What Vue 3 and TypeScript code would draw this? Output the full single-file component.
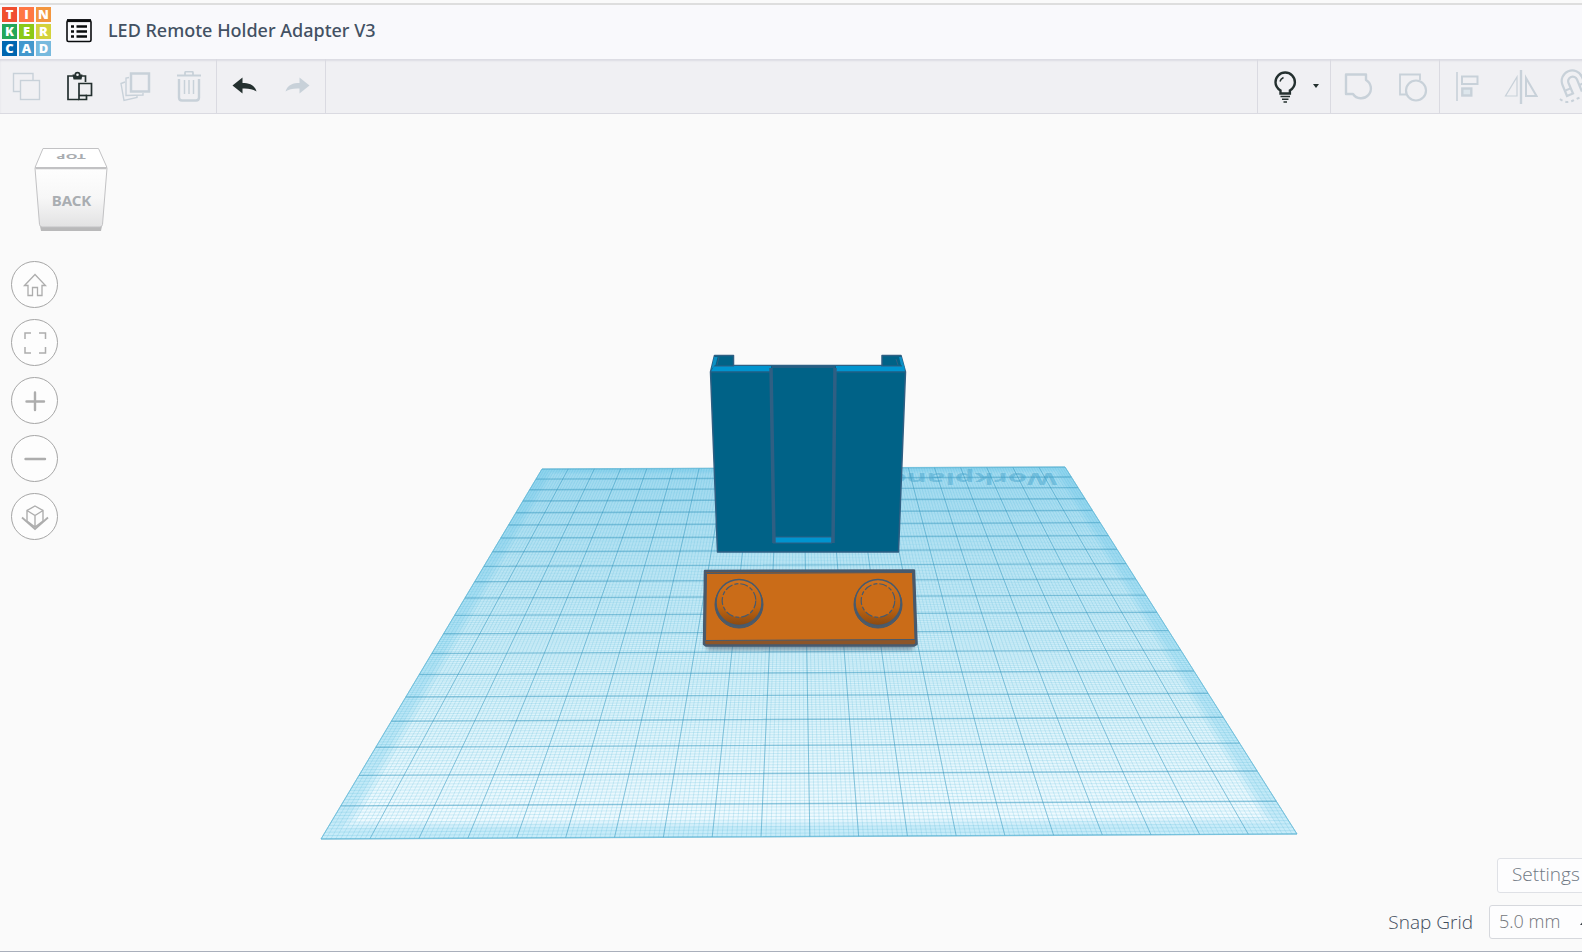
<script setup lang="ts">
import { ref } from 'vue'

type Point = [number, number]

const designName = ref('LED Remote Holder Adapter V3')
const snap = ref('5.0 mm')

const tiles = [
  { letter: 'T', tone: 'red' },
  { letter: 'I', tone: 'coral' },
  { letter: 'N', tone: 'orange' },
  { letter: 'K', tone: 'green' },
  { letter: 'E', tone: 'lime' },
  { letter: 'R', tone: 'yellow' },
  { letter: 'C', tone: 'navy' },
  { letter: 'A', tone: 'blue' },
  { letter: 'D', tone: 'sky' },
]

// Workplane corners on screen: near-left, near-right, far-right, far-left
const corners: Point[] = [[321, 839], [1297, 834], [1065, 467], [542, 469]]

// Projective mapping of the unit square onto the four corners
function projector(c: Point[]) {
  const [[x0, y0], [x1, y1], [x2, y2], [x3, y3]] = c
  const dx1 = x1 - x2, dx2 = x3 - x2, sx = x0 - x1 + x2 - x3
  const dy1 = y1 - y2, dy2 = y3 - y2, sy = y0 - y1 + y2 - y3
  const det = dx1 * dy2 - dx2 * dy1
  const g = (sx * dy2 - dx2 * sy) / det
  const h = (dx1 * sy - sx * dy1) / det
  return (u: number, v: number): string => {
    const w = g * u + h * v + 1
    const x = ((x1 - x0 + g * x1) * u + (x3 - x0 + h * x3) * v + x0) / w
    const y = ((y1 - y0 + g * y1) * u + (y3 - y0 + h * y3) * v + y0) / w
    return `${x.toFixed(2)} ${y.toFixed(2)}`
  }
}

const project = projector(corners)

function gridPath(steps: number, axis: 'u' | 'v'): string {
  let d = ''
  for (let i = 0; i <= steps; i++) {
    const t = i / steps
    d += axis === 'u'
      ? `M${project(t, 0)}L${project(t, 1)}`
      : `M${project(0, t)}L${project(1, t)}`
  }
  return d
}

function quad(inset: number): string {
  const a = inset, b = 1 - inset
  return `M${project(a, a)}L${project(b, a)}L${project(b, b)}L${project(a, b)}Z`
}

const plane = quad(0)
const rims = [0.015, 0.02, 0.025].map((inset) => plane + quad(inset))
const fineColumns = gridPath(200, 'u')
const fineRows = gridPath(200, 'v')
const majorColumns = gridPath(20, 'u')
const majorRows = gridPath(20, 'v')
</script>

<template>
  <div class="app">
    <header class="titlebar">
      <a class="logo" href="#" aria-label="Tinkercad">
        <span v-for="t in tiles" :key="t.letter" class="tile" :class="t.tone">{{ t.letter }}</span>
      </a>
      <button class="menu" type="button" aria-label="Designs">
        <svg width="26" height="24" viewBox="0 0 26 24">
          <rect x="1" y="1.5" width="24" height="21" rx="1.5" fill="none" stroke="#0a0c0e" stroke-width="1.6" />
          <path d="M1 1.6h24" stroke="#0a0c0e" stroke-width="3" />
          <path d="M5 7.5h3M5 12.5h3M5 17.5h3M10.500 7.500h10.500M10.500 12.500h10.500M10.500 17.500h10.500" stroke="#0a0c0e" stroke-width="2.4" />
        </svg>
      </button>
      <h1>{{ designName }}</h1>
    </header>

    <div class="toolbar" role="toolbar" aria-label="Editing tools">
      <div class="group">
        <button type="button" class="tool off" aria-label="Copy">
          <svg width="32" height="32" viewBox="0 0 32 32">
            <path d="M9 20.500H2.500V2.500h19.500V9" stroke-width="1.4" />
            <rect x="9.500" y="9.500" width="19" height="19" stroke-width="1.4" />
          </svg>
        </button>
        <button type="button" class="tool" aria-label="Paste">
          <svg width="32" height="32" viewBox="0 0 32 32">
            <path d="M14 28.500H3V5h5M16.500 5h4v6" stroke-width="1.7" />
            <path d="M7.500 3.500h2a3 2.800 0 0 1 6 0h2l-1 5h-8z" fill="#24302f" stroke="none" />
            <circle cx="12.500" cy="3.800" r="1.300" fill="#f0f0f3" stroke="none" />
            <path d="M14 12.500H26.500V24.500H21.500V28.500H14Z" stroke-width="1.7" />
            <path d="M14 24.500h8" stroke-width="1.7" />
          </svg>
        </button>
        <button type="button" class="tool off" aria-label="Duplicate">
          <svg width="32" height="32" viewBox="0 0 32 32">
            <rect x="12" y="2.500" width="18" height="18" stroke-width="2.500" />
            <path d="M10 6.500l-3 .5V24.500l17 -.5v-2" stroke-width="1.4" />
            <path d="M6 11l-4 1.500L5 29.500l13 -3v-2" stroke-width="1.4" />
          </svg>
        </button>
        <button type="button" class="tool off" aria-label="Delete">
          <svg width="32" height="32" viewBox="0 0 32 32">
            <path d="M4 4.500h24M12 4V2q0-1.500 1.500-1.500h5Q20 .500 20 2v2" stroke-width="1.800" />
            <path d="M6 8v18.500q0 3 3 3h14q3 0 3-3V8" stroke-width="2.400" />
            <path d="M11.500 9v14M16 9v14M20.500 9v14" stroke-width="1.500" />
          </svg>
        </button>
      </div>
      <div class="group">
        <button type="button" class="tool" aria-label="Undo">
          <svg width="32" height="32" viewBox="0 0 32 32">
            <path d="M4.500 14.500l10-8v5.500c6 0 12 1.500 14 8.500q-5-3.500-14-3v5z" fill="#24302f" stroke="none" />
          </svg>
        </button>
        <button type="button" class="tool off" aria-label="Redo">
          <svg width="32" height="32" viewBox="0 0 32 32">
            <path d="M27.500 14.500l-10-8v5.500c-6 0-12 1.500-14 8.500q5-3.500 14-3v5z" fill="#c8d1d9" stroke="none" />
          </svg>
        </button>
      </div>

      <div class="group push">
        <button type="button" class="tool" aria-label="Show all">
          <svg width="32" height="32" viewBox="0 0 32 32">
            <path d="M11.500 22.500v-3c-3-2-5-4.700-5-8.300a9.700 9.700 0 0 1 19.400 0c0 3.600-2 6.300-5 8.300v3z" stroke-width="2.400" />
            <path d="M11 10.500q.500-2.500 3.500-4" stroke-width="1.500" />
            <path d="M11.500 25.500h9.500M13 28.300h6.500M14.500 31h3.500" stroke-width="1.600" />
          </svg>
        </button>
        <button type="button" class="caret" aria-label="Visibility options">
          <svg width="6" height="4" viewBox="0 0 6 4"><path d="M0 0h6L3 4z" fill="#24302f" /></svg>
        </button>
      </div>
      <div class="group lead">
        <button type="button" class="tool off" aria-label="Group">
          <svg width="32" height="32" viewBox="0 0 32 32">
            <path d="M4 3.500h20v5.500a9.800 9.800 0 1 1-13 14H4z" stroke-width="2.400" stroke-linejoin="round" />
          </svg>
        </button>
        <button type="button" class="tool off" aria-label="Ungroup">
          <svg width="32" height="32" viewBox="0 0 32 32">
            <path d="M10 23.500H4V3.500h20V9" stroke-width="1.800" />
            <circle cx="20" cy="19.500" r="10" stroke-width="2.200" />
          </svg>
        </button>
      </div>
      <div class="group lead">
        <button type="button" class="tool off" aria-label="Align">
          <svg width="32" height="32" viewBox="0 0 32 32">
            <path d="M6 1v29" stroke-width="1.600" />
            <rect x="11" y="5.500" width="15.500" height="7.500" stroke-width="2" />
            <rect x="11.300" y="17.500" width="9" height="7" fill="#dde6ec" stroke-width="2.400" />
          </svg>
        </button>
        <button type="button" class="tool off" aria-label="Flip">
          <svg width="34" height="36" viewBox="0 0 34 36">
            <path d="M17 1v34" stroke-width="2.400" />
            <path d="M13 8v19H1.500z" stroke-width="1.200" />
            <path d="M22 9v18h10.500z" stroke-width="2" />
          </svg>
        </button>
        <button type="button" class="tool off" aria-label="Cruise">
          <svg width="32" height="36" viewBox="0 0 32 36">
            <path d="M8 27L3.500 16a10.500 10.500 0 0 1 19.500-8l5 11.500-5.500 2-4.500-11a4.500 4.500 0 0 0-8.500 3.500l4.500 10.500z" stroke-width="2.200" />
            <path d="M6.500 21.500l5.500-2.300M20.500 16l5.500-2.300" stroke-width="2" />
            <path d="M1 30q6 5 13 1.500t15-5" stroke-width="2" stroke-dasharray="3 3" />
          </svg>
        </button>
      </div>
    </div>

    <main class="workspace">
      <svg class="scene" viewBox="0 114 1582 837" role="img" aria-label="Workplane with two shapes">
        <defs>
          <linearGradient id="planeFill" x1="0" y1="0" x2="0" y2="1">
            <stop offset="0" stop-color="#b4e3f6" />
            <stop offset=".25" stop-color="#c6eaf7" />
            <stop offset=".6" stop-color="#d9f2fa" />
            <stop offset="1" stop-color="#f2fbff" />
          </linearGradient>
          <linearGradient id="knob" x1="0" y1="0" x2="0" y2="1">
            <stop offset="0" stop-color="#d2731d" />
            <stop offset=".6" stop-color="#c0640f" />
            <stop offset="1" stop-color="#8a4a12" />
          </linearGradient>
          <filter id="soft" x="-10%" y="-10%" width="120%" height="140%">
            <feGaussianBlur stdDeviation="2" />
          </filter>
        </defs>

        <path :d="plane" fill="url(#planeFill)" />
        <path v-for="(rim, i) in rims" :key="i" :d="rim" fill="#7fd2f0" fill-opacity=".13" fill-rule="evenodd" />
        <g fill="none">
          <path :d="fineColumns" stroke="#48b0d8" stroke-opacity=".22" stroke-width=".9" />
          <path :d="fineRows" stroke="#48b0d8" stroke-opacity=".22" stroke-width=".9" />
          <path :d="majorColumns" stroke="#2b8fb8" stroke-opacity=".42" />
          <path :d="majorRows" stroke="#2b8fb8" stroke-opacity=".42" stroke-width="1.400" />
          <path :d="plane" stroke="#6cc5e4" stroke-opacity=".5" />
        </g>
        <text class="plane-label" transform="matrix(-1 0 0 -.5 1057 473)">Workplane</text>

        <!-- Remote holder -->
        <g stroke="#2f5f83" stroke-width="1.500" stroke-linejoin="round">
          <path d="M714.500 355.500H733.500V365.500H882V355.500H901L905.500 372L898.500 552H717.500L710.500 372Z" fill="#006287" />
          <path d="M714 366H771L771 371.500H711ZM836 366H904L905 371.500H836Z" fill="#0094cf" stroke="none" />
          <path d="M714 357l3.500 0-2 8-4 4ZM899 357l2.500 0 3.500 12-4-4Z" fill="#0b8fc4" stroke="none" />
          <path d="M717 365L719 357M898 365L896 359M711 372H770M837 372H905M714 366H734M881 366H902" fill="none" stroke-width="1" />
          <path d="M773 537H832V543H773Z" fill="#0094cf" stroke-width="1" />
          <path d="M771 368L774 543M835 368L833 543" fill="none" stroke-width="3.500" />
          <path d="M772 367H835" fill="none" />
        </g>

        <!-- Mounting plate -->
        <path d="M705 642H916L912 650H708Z" fill="#3a4a60" fill-opacity=".5" filter="url(#soft)" />
        <g stroke="#475a6e" stroke-linejoin="round">
          <path d="M705 571L914 570.500L916.500 644L914 645.500H706L704 644Z" fill="#8d5528" stroke-width="2.500" />
          <path d="M706.500 573.500L912.500 572.500L915 639.500L705.500 640.500Z" fill="#ca6c18" stroke-width="1" />
          <g v-for="x in [739, 878]" :key="x">
            <ellipse :cx="x" cy="604.500" rx="24" ry="23.500" fill="#4e5c68" stroke-width="1" />
            <circle :cx="x" cy="602.500" r="23" fill="url(#knob)" stroke-width="1.500" />
            <circle :cx="x" cy="600.500" r="16.800" fill="#ca6c18" stroke-width="1.200" stroke-dasharray="8 2 4 2" />
          </g>
        </g>
      </svg>

      <button type="button" class="viewcube" aria-label="View cube">
        <svg width="76" height="88" viewBox="33 145 76 88">
          <defs>
            <linearGradient id="face" x1="0" y1="0" x2="0" y2="1">
              <stop offset="0" stop-color="#fefefe" />
              <stop offset=".5" stop-color="#f7f7f7" />
              <stop offset="1" stop-color="#e2e2e3" />
            </linearGradient>
          </defs>
          <path d="M40 226H102L101 231H41Z" fill="#b9b9ba" />
          <path d="M43 148.500H98.500L107 167.500H35Z" fill="#fff" stroke="#c2c2c4" stroke-linejoin="round" />
          <path d="M35 168H107L102.500 224.500Q102 227 100 227H42Q40 227 39.500 224.500Z" fill="url(#face)" stroke="#c2c2c4" stroke-linejoin="round" />
          <path d="M36 168.500H106" stroke="#c2c2c4" stroke-width="1.500" />
          <text class="cube-top" transform="matrix(-1 0 0 -.5 71 154)" text-anchor="middle">TOP</text>
          <text class="cube-face" x="71.500" y="206" text-anchor="middle">BACK</text>
        </svg>
      </button>

      <nav class="views" aria-label="Camera">
        <button type="button" aria-label="Home view">
          <svg viewBox="0 0 28 28"><path d="M3.500 14.500L14 3.500L24.500 14.500H21V24.500H16.500V16.500H11.500V24.500H7V14.500Z" stroke-width="1.300" /></svg>
        </button>
        <button type="button" aria-label="Fit all in view">
          <svg viewBox="0 0 28 28"><path d="M4 10V4H10M18 4H24.500V10M24.500 18V24H18M10 24H4V18" stroke-width="1.500" /></svg>
        </button>
        <button type="button" aria-label="Zoom in">
          <svg viewBox="0 0 28 28"><path d="M14 5.500V23M5.500 14.500H23" stroke-width="2.400" stroke-linecap="round" /></svg>
        </button>
        <button type="button" aria-label="Zoom out">
          <svg viewBox="0 0 28 28"><path d="M4.500 14H24" stroke-width="2.400" stroke-linecap="round" /></svg>
        </button>
        <button type="button" aria-label="Switch projection">
          <svg viewBox="0 0 28 28">
            <path d="M14 3L22 7.500V18L14 24L6 18V7.500ZM6 7.500L14 12.500L22 7.500M14 12.500V24" stroke-width="1.400" />
            <path d="M1 14.500L14 26L27 14.500" stroke-width="1.800" />
          </svg>
        </button>
      </nav>

      <div class="grid-options">
        <button type="button" class="settings">Settings</button>
        <div class="snap">
          <label for="snap">Snap Grid</label>
          <span class="picker">
            <select id="snap" v-model="snap">
              <option>1.0 mm</option>
              <option>5.0 mm</option>
            </select>
            <svg width="10" height="6" viewBox="0 0 10 6"><path d="M0 6L5 0l5 6z" fill="#3a4046" /></svg>
          </span>
        </div>
      </div>
    </main>
  </div>
</template>

<style>
body {
  margin: 0;
  background: #fafafa;
}
</style>

<style scoped>
.app {
  display: flex;
  flex-direction: column;
  box-sizing: border-box;
  min-height: 100vh;
  overflow: hidden;
  border-bottom: 1px solid #a9afbb;
  font-family: "Noto Sans", "Open Sans", sans-serif;
}

button {
  padding: 0;
  border: 0;
  background: none;
  font: inherit;
  cursor: pointer;
}

svg {
  display: block;
}

.titlebar {
  display: flex;
  align-items: center;
  box-sizing: border-box;
  height: 56px;
  margin-top: 3px;
  padding: 0 0 2px 2px;
  border-top: 2px solid #dedede;
  background: #f9f9fc;
}

.logo {
  display: grid;
  grid-template-columns: repeat(3, 15px);
  grid-auto-rows: 15px;
  gap: 2px;
  text-decoration: none;
}

.tile {
  color: #fff;
  font: 800 13px/15px "Open Sans", sans-serif;
  text-align: center;
}

.red { background: #f04e30; }
.coral { background: #ff7744; }
.orange { background: #f3963f; }
.green { background: #24a65a; }
.lime { background: #8bc918; }
.yellow { background: #d3d23c; }
.navy { background: #0066b0; }
.blue { background: #4398cd; }
.sky { background: #78bade; }

.menu {
  margin: 0 16px 0 15px;
}

h1 {
  margin: 0;
  padding-bottom: 2px;
  color: #435163;
  font-family: "Noto Sans", sans-serif;
  font-size: 18px;
  font-weight: 500;
  line-height: 24px;
  white-space: nowrap;
}

.toolbar {
  position: relative;
  display: flex;
  height: 54px;
  margin-right: -19px;
  border-bottom: 1px solid #dadae1;
  background: #f0f0f3;
  box-shadow: inset 0 2px 2px #dcdce3;
}

.group {
  display: flex;
  border-right: 1px solid #dadae1;
}

.push {
  margin-left: auto;
}

.push,
.lead {
  border-right: 0;
  border-left: 1px solid #dadae1;
}

.tool {
  display: grid;
  place-items: center;
  width: 54px;
  padding-top: 1px;
  color: #24302f;
}

.tool svg {
  fill: none;
  stroke: currentColor;
}

.off {
  color: #c8d1d9;
}

.caret {
  width: 18px;
  padding-left: 1px;
}

.lead + .lead {
  margin-right: -1px;
}

.workspace {
  position: relative;
  flex: 1;
  display: flex;
  flex-direction: column;
  align-items: flex-start;
  background: #fafafa;
}

.scene {
  position: absolute;
  inset: 0;
  width: 100%;
  height: 100%;
}

.plane-label {
  fill: #3e9fc8;
  fill-opacity: .45;
  font: 700 31px "Open Sans", sans-serif;
}

.viewcube {
  position: relative;
  margin: 31px 0 0 33px;
}

.cube-top,
.cube-face {
  fill: #a9adb1;
  font: 700 15px "Noto Sans", sans-serif;
}

.views {
  position: relative;
  display: grid;
  gap: 11px;
  margin: 28px 0 0 11px;
}

.views button {
  display: grid;
  place-items: center;
  box-sizing: border-box;
  width: 47px;
  height: 47px;
  border: 1px solid #a6a6a6;
  border-radius: 50%;
  background: #fdfdfd;
}

.views svg {
  width: 28px;
  height: 28px;
  fill: none;
  stroke: #adadad;
}

.grid-options {
  position: absolute;
  right: 0;
  bottom: 12px;
  display: grid;
  justify-items: end;
  gap: 12px;
  margin-right: -20px;
  font-family: "Open Sans", sans-serif;
  font-size: 19px;
  font-weight: 300;
}

.settings {
  box-sizing: border-box;
  width: 105px;
  height: 35px;
  padding: 0 0 3px 14px;
  border: 1px solid #dfe1e6;
  border-radius: 3px;
  background: #fdfdfe;
  color: #6f7883;
  text-align: left;
}

.snap {
  display: flex;
  align-items: center;
  gap: 16px;
  color: #3f4b5b;
}

.picker {
  display: flex;
  align-items: center;
  box-sizing: border-box;
  width: 113px;
  height: 34px;
  border: 1px solid #d6d8dd;
  border-radius: 3px;
  background: #fdfdfe;
  font-size: 18px;
}

.picker select {
  width: 90px;
  height: 32px;
  padding: 0 0 2px 9px;
  border: 0;
  background: transparent;
  color: #73767b;
  font: inherit;
  appearance: none;
}
</style>
